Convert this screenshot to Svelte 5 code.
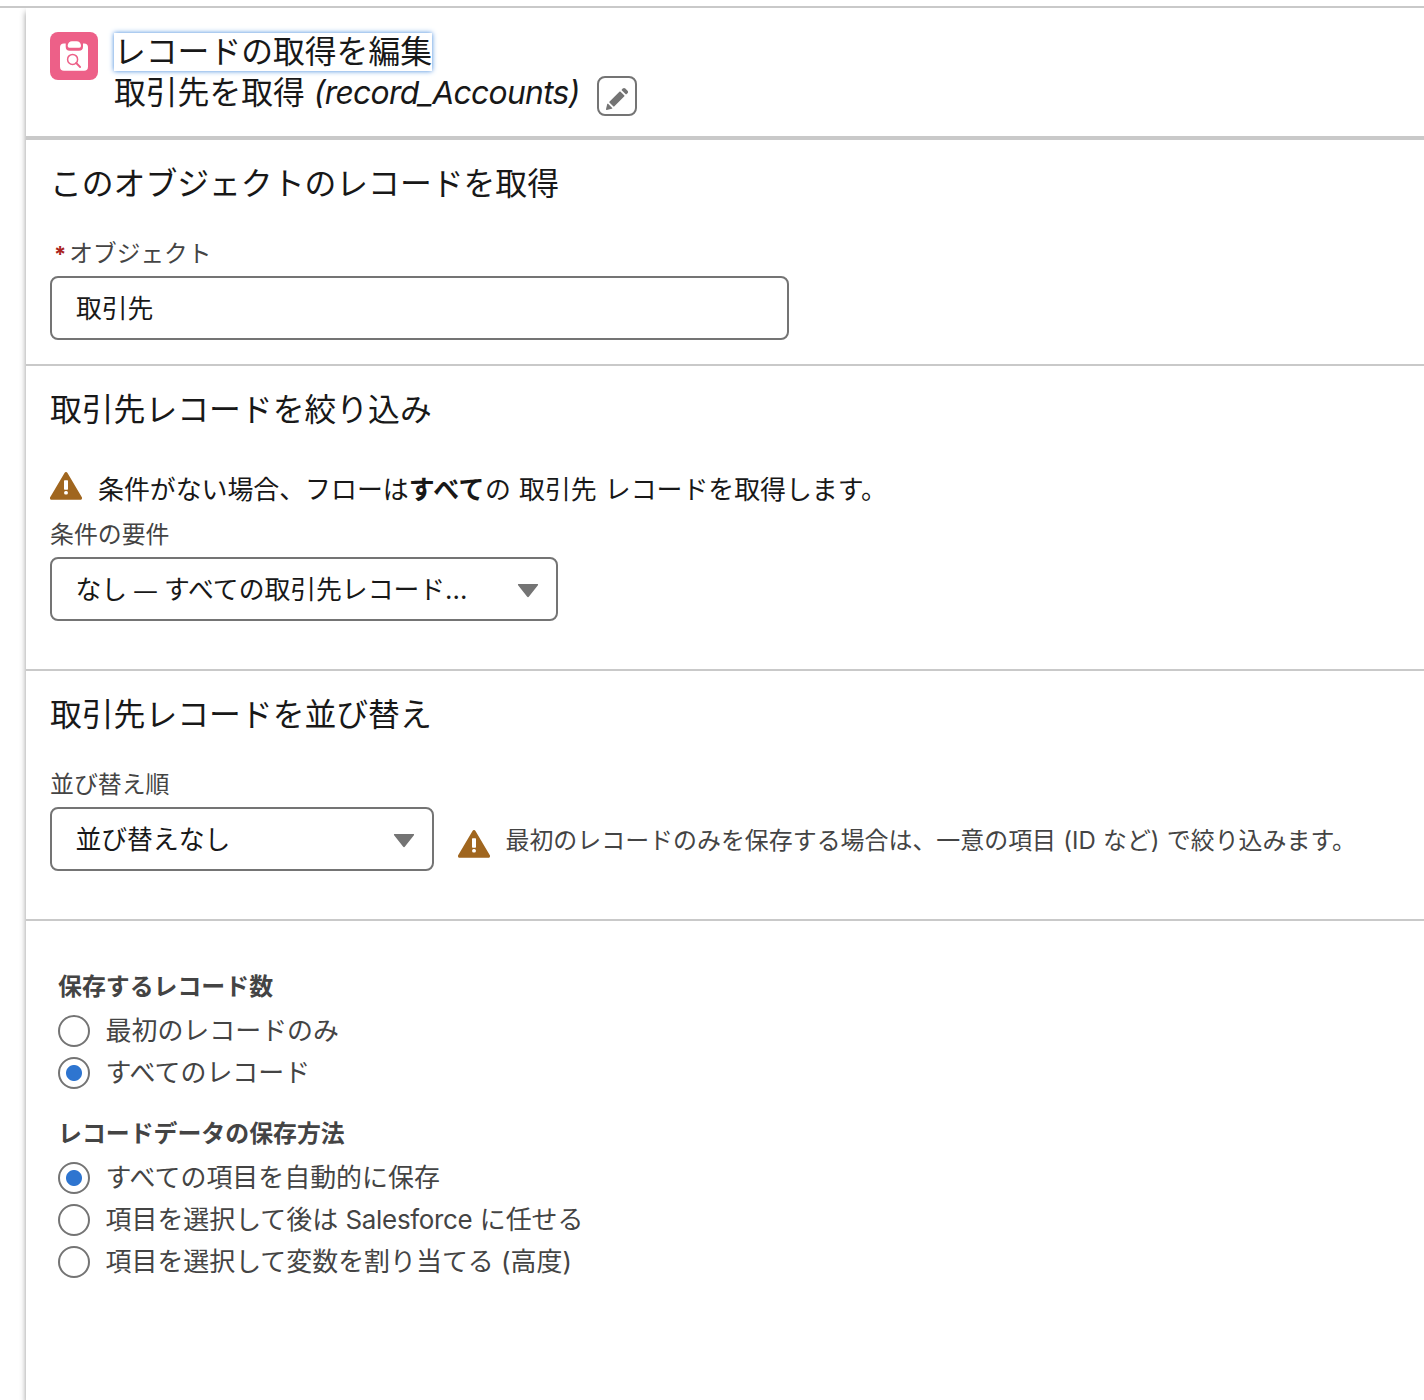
<script lang="ts">
  type Option = { value: string; label: string; brand?: string; rest?: string };

  const countOptions: Option[] = [
    { value: 'first', label: '最初のレコードのみ' },
    { value: 'all', label: 'すべてのレコード' },
  ];

  const storeOptions: Option[] = [
    { value: 'auto', label: 'すべての項目を自動的に保存' },
    { value: 'fields', label: '項目を選択して後は ', brand: 'Salesforce', rest: ' に任せる' },
    { value: 'manual', label: '項目を選択して変数を割り当てる (高度)' },
  ];

  let objectName = $state('取引先');
  let recordCount = $state('all');
  let storeMethod = $state('auto');
</script>

{#snippet warningIcon()}
  <svg class="warning" viewBox="0 0 32 28" aria-hidden="true">
    <path
      fill="#a0661f"
      d="M14.5.9a1.75 1.75 0 0 1 3 0l14.2 24.2c.8 1.3.1 2.7-1.3 2.7H1.6C.2 27.8-.5 26.4.3 25.1z"
    />
    <rect x="14" y="8.2" width="4" height="9.5" rx="0.7" fill="#fff" />
    <rect x="14.1" y="18.9" width="3.8" height="3.6" rx="1.5" fill="#fff" />
  </svg>
{/snippet}

{#snippet caret()}
  <svg class="caret" viewBox="0 0 22 14" aria-hidden="true">
    <path d="M1.6 0h18.8c.6 0 .9.7.5 1.2L12 12.6c-.5.7-1.5.7-2 0L1.1 1.2C.7.7 1 0 1.6 0z" fill="#747474" />
  </svg>
{/snippet}

{#snippet radioGroup(name: string, legend: string, options: Option[], selected: string, onselect: (v: string) => void)}
  <fieldset class="group">
    <legend>{legend}</legend>
    {#each options as option}
      <label class="radio">
        <input
          type="radio"
          {name}
          value={option.value}
          checked={selected === option.value}
          onchange={() => onselect(option.value)}
        />
        <span>{option.label}{#if option.brand}<span class="brand">{option.brand}</span>{option.rest}{/if}</span>
      </label>
    {/each}
  </fieldset>
{/snippet}

<div class="page">
  <main class="panel">
    <header class="header">
      <svg class="tile" viewBox="0 0 48 48" aria-hidden="true">
        <rect width="48" height="48" rx="8" fill="#ed6088" />
        <rect x="10" y="11.5" width="28" height="27.3" rx="4" fill="#fff" />
        <path d="M15.7 11h17.3v3.7a4 4 0 0 1-4 4h-9.3a4 4 0 0 1-4-4z" fill="#ed6088" />
        <path d="M17.7 13.5a4.3 4.3 0 0 1 4.3-4.3h4.7a4.3 4.3 0 0 1 4.3 4.3v.6a1.6 1.6 0 0 1-1.6 1.6H19.3a1.6 1.6 0 0 1-1.6-1.6z" fill="#fff" />
        <circle cx="22.6" cy="27.4" r="5" fill="none" stroke="#ed6088" stroke-width="1.5" />
        <path d="M26.2 31l3.9 4" stroke="#ed6088" stroke-width="1.8" stroke-linecap="round" />
      </svg>
      <div class="titles">
        <h1>レコードの取得を編集</h1>
        <div class="name-row">
          <span class="name">取引先を取得 <em>(record_Accounts)</em></span>
          <button class="edit" aria-label="編集">
            <svg viewBox="0 0 52 52" fill="#747474">
              <path d="M9.5 33.4l8.9 8.9c.4.4 1 .4 1.4 0L42 20c.4-.4.4-1 0-1.4l-8.8-8.8c-.4-.4-1-.4-1.4 0L9.5 32.1c-.4.4-.4 1 0 1.3zM36.1 5.7c-.4.4-.4 1 0 1.4l8.8 8.8c.4.4 1 .4 1.4 0l2.5-2.5c1.6-1.5 1.6-3.9 0-5.5l-4.7-4.7c-1.6-1.6-4.1-1.6-5.7 0l-2.3 2.5zM2.1 48.2c-.2 1 .7 1.9 1.7 1.7l10.9-2.6c.4-.1.7-.3.9-.5l.2-.2c.2-.2.3-.9-.1-1.3l-9-9c-.4-.4-1.1-.3-1.3-.1l-.2.2c-.3.3-.4.6-.5.9L2.1 48.2z" />
            </svg>
          </button>
        </div>
      </div>
    </header>

    <section class="section object">
      <h2>このオブジェクトのレコードを取得</h2>
      <label class="label required" for="object"><abbr>*</abbr>オブジェクト</label>
      <input id="object" class="control text" type="text" bind:value={objectName} />
    </section>

    <section class="section filter">
      <h2>取引先レコードを絞り込み</h2>
      <p class="notice">
        {@render warningIcon()}
        <span>条件がない場合、フローは<strong>すべて</strong>の 取引先 レコードを取得します。</span>
      </p>
      <div class="label">条件の要件</div>
      <button class="control select wide">
        <span>なし <span class="dash">—</span> すべての取引先レコード...</span>
        {@render caret()}
      </button>
    </section>

    <section class="section sort">
      <h2>取引先レコードを並び替え</h2>
      <div class="label">並び替え順</div>
      <div class="sort-row">
        <button class="control select">
          <span>並び替えなし</span>
          {@render caret()}
        </button>
        {@render warningIcon()}
        <span class="hint">最初のレコードのみを保存する場合は、一意の項目 (ID など) で絞り込みます。</span>
      </div>
    </section>

    <section class="storage">
      {@render radioGroup('count', '保存するレコード数', countOptions, recordCount, (v) => (recordCount = v))}
      {@render radioGroup('store', 'レコードデータの保存方法', storeOptions, storeMethod, (v) => (storeMethod = v))}
    </section>
  </main>
</div>

<style>
  :global(body) {
    background: #fff;
  }

  .page {
    box-sizing: border-box;
    height: 1400px;
    padding: 6px 0 0 26px;
    overflow: hidden;
    background: linear-gradient(#c9c9c9, #c9c9c9) 0 6px / 100% 2px no-repeat;
    font-family: Inter, 'Noto Sans CJK JP', sans-serif;
    color: #181818;
  }

  .panel {
    height: 1392px;
    margin-top: 2px;
    background: #fff;
    box-shadow: 0 4px 6px rgba(0, 0, 0, 0.42);
    clip-path: inset(0 0 0 -20px);
  }

  h1,
  h2,
  p {
    margin: 0;
    font-weight: 400;
  }

  button {
    font: inherit;
    color: inherit;
    background: #fff;
    text-align: left;
  }

  .header {
    display: flex;
    gap: 16px;
    box-sizing: border-box;
    height: 132px;
    padding: 24px 24px 0;
    border-bottom: 4px solid #c9c9c9;
  }

  .tile {
    width: 48px;
    height: 48px;
  }

  h1 {
    width: 318px;
    height: 38px;
    margin-top: 1px;
    font-size: 31.8px;
    line-height: 38px;
    white-space: nowrap;
    box-shadow: 0 0 5px #3f87dc;
  }

  .name-row {
    display: flex;
    gap: 17px;
  }

  .name {
    font-size: 31.8px;
    line-height: 44px;
    white-space: nowrap;
  }

  .name em {
    letter-spacing: -0.69px;
  }

  .edit {
    display: flex;
    box-sizing: border-box;
    width: 40px;
    height: 40px;
    margin-top: 5px;
    padding: 9px 6px 5px;
    border: 2px solid #747474;
    border-radius: 8px;
  }

  .edit svg {
    width: 24px;
    height: 24px;
  }

  .section {
    box-sizing: border-box;
    padding: 24px 24px 0;
    border-bottom: 2px solid #c9c9c9;
  }

  .object {
    height: 226px;
  }

  .filter {
    height: 305px;
  }

  .sort {
    height: 250px;
  }

  h2 {
    font-size: 31.82px;
    line-height: 40px;
  }

  .label {
    display: block;
    font-size: 23.9px;
    line-height: 36px;
    color: #444;
  }

  .required {
    margin: 32px 0 4px;
    padding-left: 4px;
    font-size: 23.7px;
  }

  abbr {
    margin-right: 3px;
    font-size: 22px;
    font-weight: 700;
    line-height: 1;
    color: #aa2421;
  }

  .control {
    box-sizing: border-box;
    height: 64px;
    padding: 0 24px 4px;
    border: 2px solid #747474;
    border-radius: 8px;
    font-size: 25.8px;
    color: #181818;
  }

  .text {
    display: block;
    width: 739px;
    font-family: inherit;
  }

  .select {
    display: flex;
    align-items: center;
    justify-content: space-between;
    width: 384px;
    padding: 0 17px 4px 23.5px;
    white-space: nowrap;
  }

  .wide {
    width: 508px;
  }

  .dash {
    font-size: 22.5px;
  }

  .caret {
    width: 22px;
    height: 14px;
    margin-top: 8px;
  }

  .warning {
    flex: none;
    width: 32px;
    height: 28px;
  }

  .notice {
    display: flex;
    gap: 16px;
    margin-top: 42px;
    font-size: 25.9px;
    line-height: 36px;
    word-spacing: 0.8px;
  }

  .notice strong {
    letter-spacing: 0.5px;
  }

  .filter .label {
    margin: 9px 0 4px;
  }

  .sort .label {
    margin: 32px 0 4px;
  }

  .sort-row {
    display: flex;
    align-items: flex-start;
  }

  .sort-row > :global(.warning) {
    margin: 23px 15.5px 0 24px;
  }

  .hint {
    margin-top: 16px;
    font-size: 23.95px;
    line-height: 36px;
    color: #444;
    white-space: nowrap;
    word-spacing: 0.5px;
  }

  .storage {
    padding: 48px 32px 0;
    color: #444;
  }

  .group {
    margin: 0 0 22px;
    padding: 0;
    border: 0;
  }

  legend {
    padding: 0;
    margin-bottom: 5px;
    font-size: 23.9px;
    font-weight: 700;
    line-height: 36px;
  }

  .radio {
    display: flex;
    align-items: center;
    gap: 15.5px;
    height: 42px;
    font-size: 25.95px;
    line-height: 42px;
  }

  .brand {
    letter-spacing: -0.3px;
  }

  .radio input {
    appearance: none;
    box-sizing: border-box;
    width: 32px;
    height: 32px;
    margin: 0;
    border: 2px solid #747474;
    border-radius: 50%;
    background: #fff;
  }

  .radio input:checked {
    background: radial-gradient(circle, #2e75d0 7.5px, transparent 8.5px);
  }
</style>
